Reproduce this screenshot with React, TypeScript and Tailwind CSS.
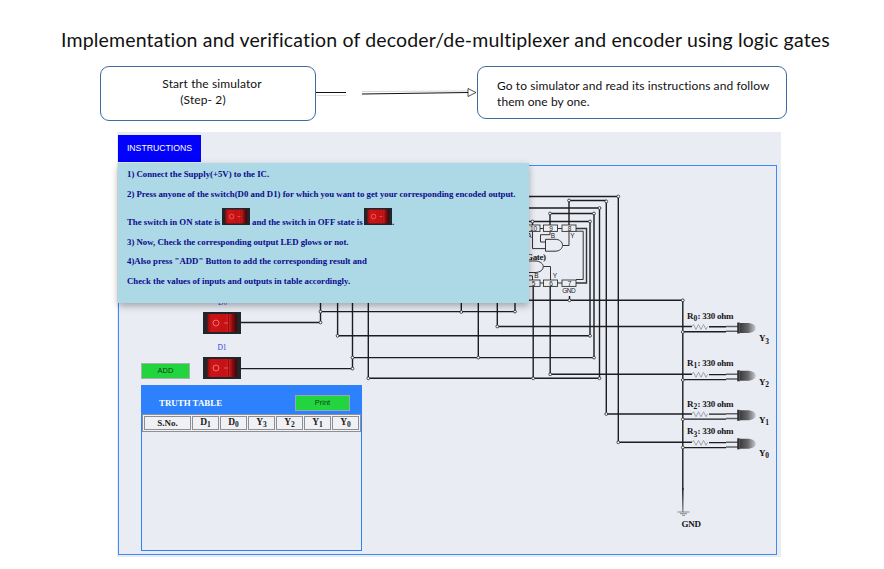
import React from "react";

const serif = "font-['Liberation_Serif',serif]";
const sans = "font-['Liberation_Sans',sans-serif]";

function Switch({ className }: { className: string }) {
  return (
    <svg viewBox="0 0 38 22" preserveAspectRatio="none" className={className}>
      <defs>
        <linearGradient id="rocker" x1="0" x2="1">
          <stop offset="0" stopColor="#8f0d10" />
          <stop offset="0.14" stopColor="#cf1416" />
          <stop offset="0.6" stopColor="#c31114" />
          <stop offset="0.72" stopColor="#d9201f" />
          <stop offset="0.84" stopColor="#8e0c0f" />
          <stop offset="1" stopColor="#3a0709" />
        </linearGradient>
      </defs>
      <rect width="38" height="22" fill="#20262a" />
      <rect x="4.5" y="2" width="29.5" height="18" fill="url(#rocker)" />
      <rect x="25" y="2" width="1" height="18" fill="#8b1013" />
      <circle cx="13" cy="11" r="3" fill="none" stroke="#f0706c" strokeWidth="1" />
      <path d="M21 11h4" stroke="#e85a56" strokeWidth="1" />
    </svg>
  );
}

const wires = [
  "M529 196.5H618.3V442.3H692",
  "M569 225V200.5H606.3V414H692",
  "M529 208H599.5V378.3H368.3V303",
  "M550 225V213.5H594V357.6H352.5",
  "M529 221.5H590V335.8H337.6V303",
  "M532.5 221.5V225",
  "M533.2 286V378.3",
  "M550.2 286V374.3H692",
  "M569.5 296V300.3",
  "M529 300.3H682.8V490",
  "M461.3 303V312",
  "M478.3 303V357.6",
  "M497.3 303V326.5H692",
  "M515 303V311.6H320.5",
  "M320.5 303V322.5H241",
  "M352.5 303V368.6H241",
];

const nodes = [
  [618.3, 196.5], [618.3, 442.3], [569, 200.5], [606.3, 201.5], [606.3, 414], [599.5, 208],
  [550, 213.5], [594, 213.5], [590, 221.5], [532.5, 221.5], [599.5, 378.3], [368.3, 378.3],
  [533.2, 378.3], [594, 357.6], [478.3, 357.6], [352.5, 357.6], [590, 335.8], [337.6, 335.8],
  [550.2, 374.3], [569.5, 300.3], [682.8, 300.3], [461.3, 312], [515, 311.6], [320.5, 311.6],
  [320.5, 322.5], [352.5, 368.6], [497.3, 326.5],
  [682.8, 332], [682.8, 380], [682.8, 419.3], [682.8, 447.5],
];

const outputs = [
  { r: "0", y: "3", line: 326.5, label: 319, out: 341 },
  { r: "1", y: "2", line: 374.3, label: 366, out: 384.5 },
  { r: "2", y: "1", line: 413.8, label: 407, out: 422.7 },
  { r: "3", y: "0", line: 442.3, label: 434.3, out: 455.8 },
];

const pins = [
  { n: "10", x: 526, y: 225 }, { n: "9", x: 543.5, y: 225 }, { n: "8", x: 562, y: 225 },
  { n: "5", x: 526, y: 280 }, { n: "6", x: 543.5, y: 280 }, { n: "7", x: 562, y: 280 },
];

function Circuit() {
  return (
    <svg viewBox="117 132 664 425" className="absolute inset-0 h-[425px] w-[664px]">
      <defs>
        <linearGradient id="led" x1="0" x2="1">
          <stop offset="0" stopColor="#3c3c3e" />
          <stop offset="0.5" stopColor="#66676a" />
          <stop offset="1" stopColor="#c9cacf" />
        </linearGradient>
        <linearGradient id="ground" x1="0" x2="0" y1="0" y2="1">
          <stop offset="0" stopColor="#222" />
          <stop offset="1" stopColor="#999" />
        </linearGradient>
      </defs>
      <g fill="none" stroke="#1d1d1f" strokeWidth="1.4">
        {wires.map((d) => <path key={d} d={d} />)}
      </g>
      <rect x="682" y="488" width="1.6" height="24" fill="url(#ground)" />
      <path d="M677.5 512H689.5M680 513.7H687M682 515.3H685" stroke="#888" />

      <g fill="none" stroke="#333" strokeWidth="1">
        <path d="M540 228.5H543.5M557.5 228.5H562M540 283H543.5M557.5 283H562" />
        <path strokeWidth="1.4" d="M576 228.5H586.5V283H576" />
        <path d="M576 231.2H583.2V279.5H576" />
        <path d="M545.5 239.3H555C565 239.3 565 251.2 555 251.2H545.5Z" />
        <path d="M563 245.5H569V231.5M550 231.5V234.7H540.5V242H545.5M532.5 231.5V248.6H545.5" />
        <path d="M529 261H535C546 261 546 272.5 535 272.5H529M543.5 266.5H550.5V280M532.5 280V275.8H529" />
      </g>
      <g className={sans} fontSize="6.5" fill="#222" textAnchor="middle">
        {pins.map((p) => (
          <g key={p.n}>
            <rect x={p.x} y={p.y} width="14" height="6.4" fill="#eceef4" stroke="#333" strokeWidth="0.9" />
            <text x={p.x + 7.5} y={p.y + 5.6}>{p.n}</text>
          </g>
        ))}
        <text x="552.8" y="238">B</text>
        <text x="572.5" y="238">Y</text>
        <text x="529.5" y="238">A</text>
        <text x="536.5" y="278.3">B</text>
        <text x="554.8" y="278.3">Y</text>
        <text x="569" y="292.8" textLength="13.5">GND</text>
      </g>
      <g className={serif} fontWeight="bold" fill="#151515" fontSize="9">
        <text x="526" y="259.5" textLength="20">Gate)</text>
        {outputs.map((o) => (
          <g key={o.r}>
            <text x="687" y={o.label}>R</text>
            <text x="693.5" y={o.label + 2.2} fontSize="7.5">{o.r}</text>
            <text x="697.5" y={o.label} textLength="36">: 330 ohm</text>
            <text x="759" y={o.out}>Y</text>
            <text x="765.3" y={o.out + 2.5} fontSize="7.5">{o.y}</text>
          </g>
        ))}
        <text x="681.5" y="526.7" textLength="19.5">GND</text>
      </g>
      {outputs.map((o) => (
        <g key={o.y} fill="none">
          <path
            d={`M692 ${o.line}l1.5 -2 2.5 5 2.5 -5 2.5 5 2.5 -5 2.5 5 1.5 -3`}
            stroke="#9b9ca2"
            strokeWidth="0.9"
          />
          <path d={`M709 ${o.line + 0.3}H726M682.8 ${o.line + 5.3}H726`} stroke="#1d1d1f" strokeWidth="1.4" />
          <path d={`M726 ${o.line}H738M726 ${o.line + 4.7}H738`} stroke="#606166" strokeWidth="1.4" />
          <path
            d={`M740 ${o.line - 3.500}H749C758 ${o.line - 2.500} 758 ${o.line + 5.500} 749 ${o.line + 6.500}H740Z`}
            fill="url(#led)"
          />
          <rect x="737.2" y={o.line - 4} width="2.6" height="11" fill="#303033" />
        </g>
      ))}
      <g fill="#fff" stroke="#222" strokeWidth="0.8">
        {nodes.map(([x, y]) => <circle key={`${x}-${y}`} cx={x} cy={y} r="1.4" />)}
      </g>
      <g className={serif} fontSize="7.5" fill="#2a3fe8">
        <text x="218" y="304.5">D0</text>
        <text x="217.500" y="350" textLength="9">D1</text>
      </g>
    </svg>
  );
}

function Instructions() {
  return (
    <div className={`absolute left-px top-[31px] h-[140px] w-[411px] bg-[#add8e6] pl-[9px] pt-[6px] text-[8.77px] font-bold leading-[10px] whitespace-nowrap text-[#0a0a8c] shadow-[0_3px_7px_rgba(0,0,0,0.3)] ${serif}`}>
      <p>1) Connect the Supply(+5V) to the IC.</p>
      <p className="mt-[10px]">2) Press anyone of the switch(D0 and D1) for which you want to get your corresponding encoded output.</p>
      <p className="mt-[8px] flex h-[20px] items-end">
        <span className="w-[95px]">The switch in ON state is</span>
        <Switch className="mb-[2px] h-[17px] w-[28px]" />
        <span className="ml-[2px] w-[112px]">and the switch in OFF state is</span>
        <Switch className="mb-[2px] h-[17px] w-[28px]" />
        <span>.</span>
      </p>
      <p className="mt-[10px]">3) Now, Check the corresponding output LED glows or not.</p>
      <p className="mt-[9px]">4)Also press "ADD" Button to add the corresponding result and</p>
      <p className="mt-[10px]">Check the values of inputs and outputs in table accordingly.</p>
    </div>
  );
}

function TruthTable() {
  return (
    <section className={`ml-[22px] mt-[6px] h-[166px] w-[221px] border border-[#2f80fb] font-bold ${serif}`}>
      <div className="flex h-[28px] items-start justify-between bg-[#2d81fc] pl-[17px] pr-[11px] pt-[9px]">
        <h2 className="pt-[2px] text-[8.9px] leading-[12px] text-white">TRUTH TABLE</h2>
        <button className={`h-[16px] w-[55px] border border-[#9aa5b5] bg-[#22d53f] text-[7.5px] leading-[14px] font-normal text-[#123c16] ${sans}`}>Print</button>
      </div>
      <div className="grid h-[18px] grid-cols-[47px_repeat(6,1fr)] gap-px border border-[#8d8f95] bg-[#f0f1f5] p-px text-center text-[9.5px] leading-[12px] text-[#222]">
        <div className="border border-[#8d8f95] text-[9px]">S.No.</div>
        {["D1", "D0", "Y3", "Y2", "Y1", "Y0"].map((name) => (
          <div key={name} className="border border-[#8d8f95] leading-[11px]">
            {name[0]}
            <span className="relative top-[2px] text-[7.5px]">{name[1]}</span>
          </div>
        ))}
      </div>
    </section>
  );
}

function Simulator() {
  return (
    <main className="relative ml-[117px] mt-[11px] h-[425px] w-[664px] bg-[#eaecf4] pl-px pt-[3px]">
      <button className={`block h-[27px] w-[83px] bg-[#0202fa] text-[8.7px] text-white ${sans}`}>INSTRUCTIONS</button>
      <Circuit />
      <div className="mt-[3px] h-[390px] w-[659px] border border-[#3d8bf8] pt-[146px]">
        <Switch className="relative ml-[84px] h-[22px] w-[38px]" />
        <div className="mt-[23px] flex items-start pl-[22px]">
          <button className={`mt-[6px] h-[16px] w-[49px] border border-[#a8b0ac] bg-[#22d53f] text-[7.5px] leading-[14px] text-[#123c16] ${sans}`}>ADD</button>
          <Switch className="relative ml-[13px] h-[22px] w-[38px]" />
        </div>
        <TruthTable />
      </div>
      <Instructions />
    </main>
  );
}

export default function App() {
  return (
    <div className="h-[569px] w-[884px] overflow-hidden bg-white font-[Lato,sans-serif] text-[#111]">
      <h1 className="ml-[61px] pt-[28px] text-[19.5px] leading-[24px] tracking-[0.16px] whitespace-nowrap">
        Implementation and verification of decoder/de-multiplexer and encoder using logic gates
      </h1>
      <div className="mt-[14px] flex h-[55px] items-start pl-[100px]">
        <div className="h-[55px] w-[216px] rounded-[9px] border border-[#3d6c9e] pt-[9px] text-center text-[12px] leading-[16px] tracking-[0.1px]">
          <p className="pl-[8px]">Start the simulator</p>
          <p className="pr-[10px]">(Step- 2)</p>
        </div>
        <svg viewBox="0 0 161 55" className="h-[55px] w-[161px]" fill="none">
          <path d="M0 26.5H30" stroke="#111" />
          <path d="M1 29.5H30" stroke="#ccc" strokeWidth="0.7" />
          <path d="M46 28L153 26.5" stroke="#111" />
          <path d="M46 25.5L153 25" stroke="#aaa" strokeWidth="0.5" />
          <path d="M152 22.5L160 26.5L152 30.5Z" fill="#fff" stroke="#222" strokeWidth="0.8" />
        </svg>
        <div className="h-[53px] w-[310px] rounded-[9px] border border-[#3d6c9e] pl-[19px] pt-[11px] text-[12px] leading-[16px] tracking-[0.08px] whitespace-nowrap">
          <p>Go to simulator and read its instructions and follow</p>
          <p>them one by one.</p>
        </div>
      </div>
      <Simulator />
    </div>
  );
}
